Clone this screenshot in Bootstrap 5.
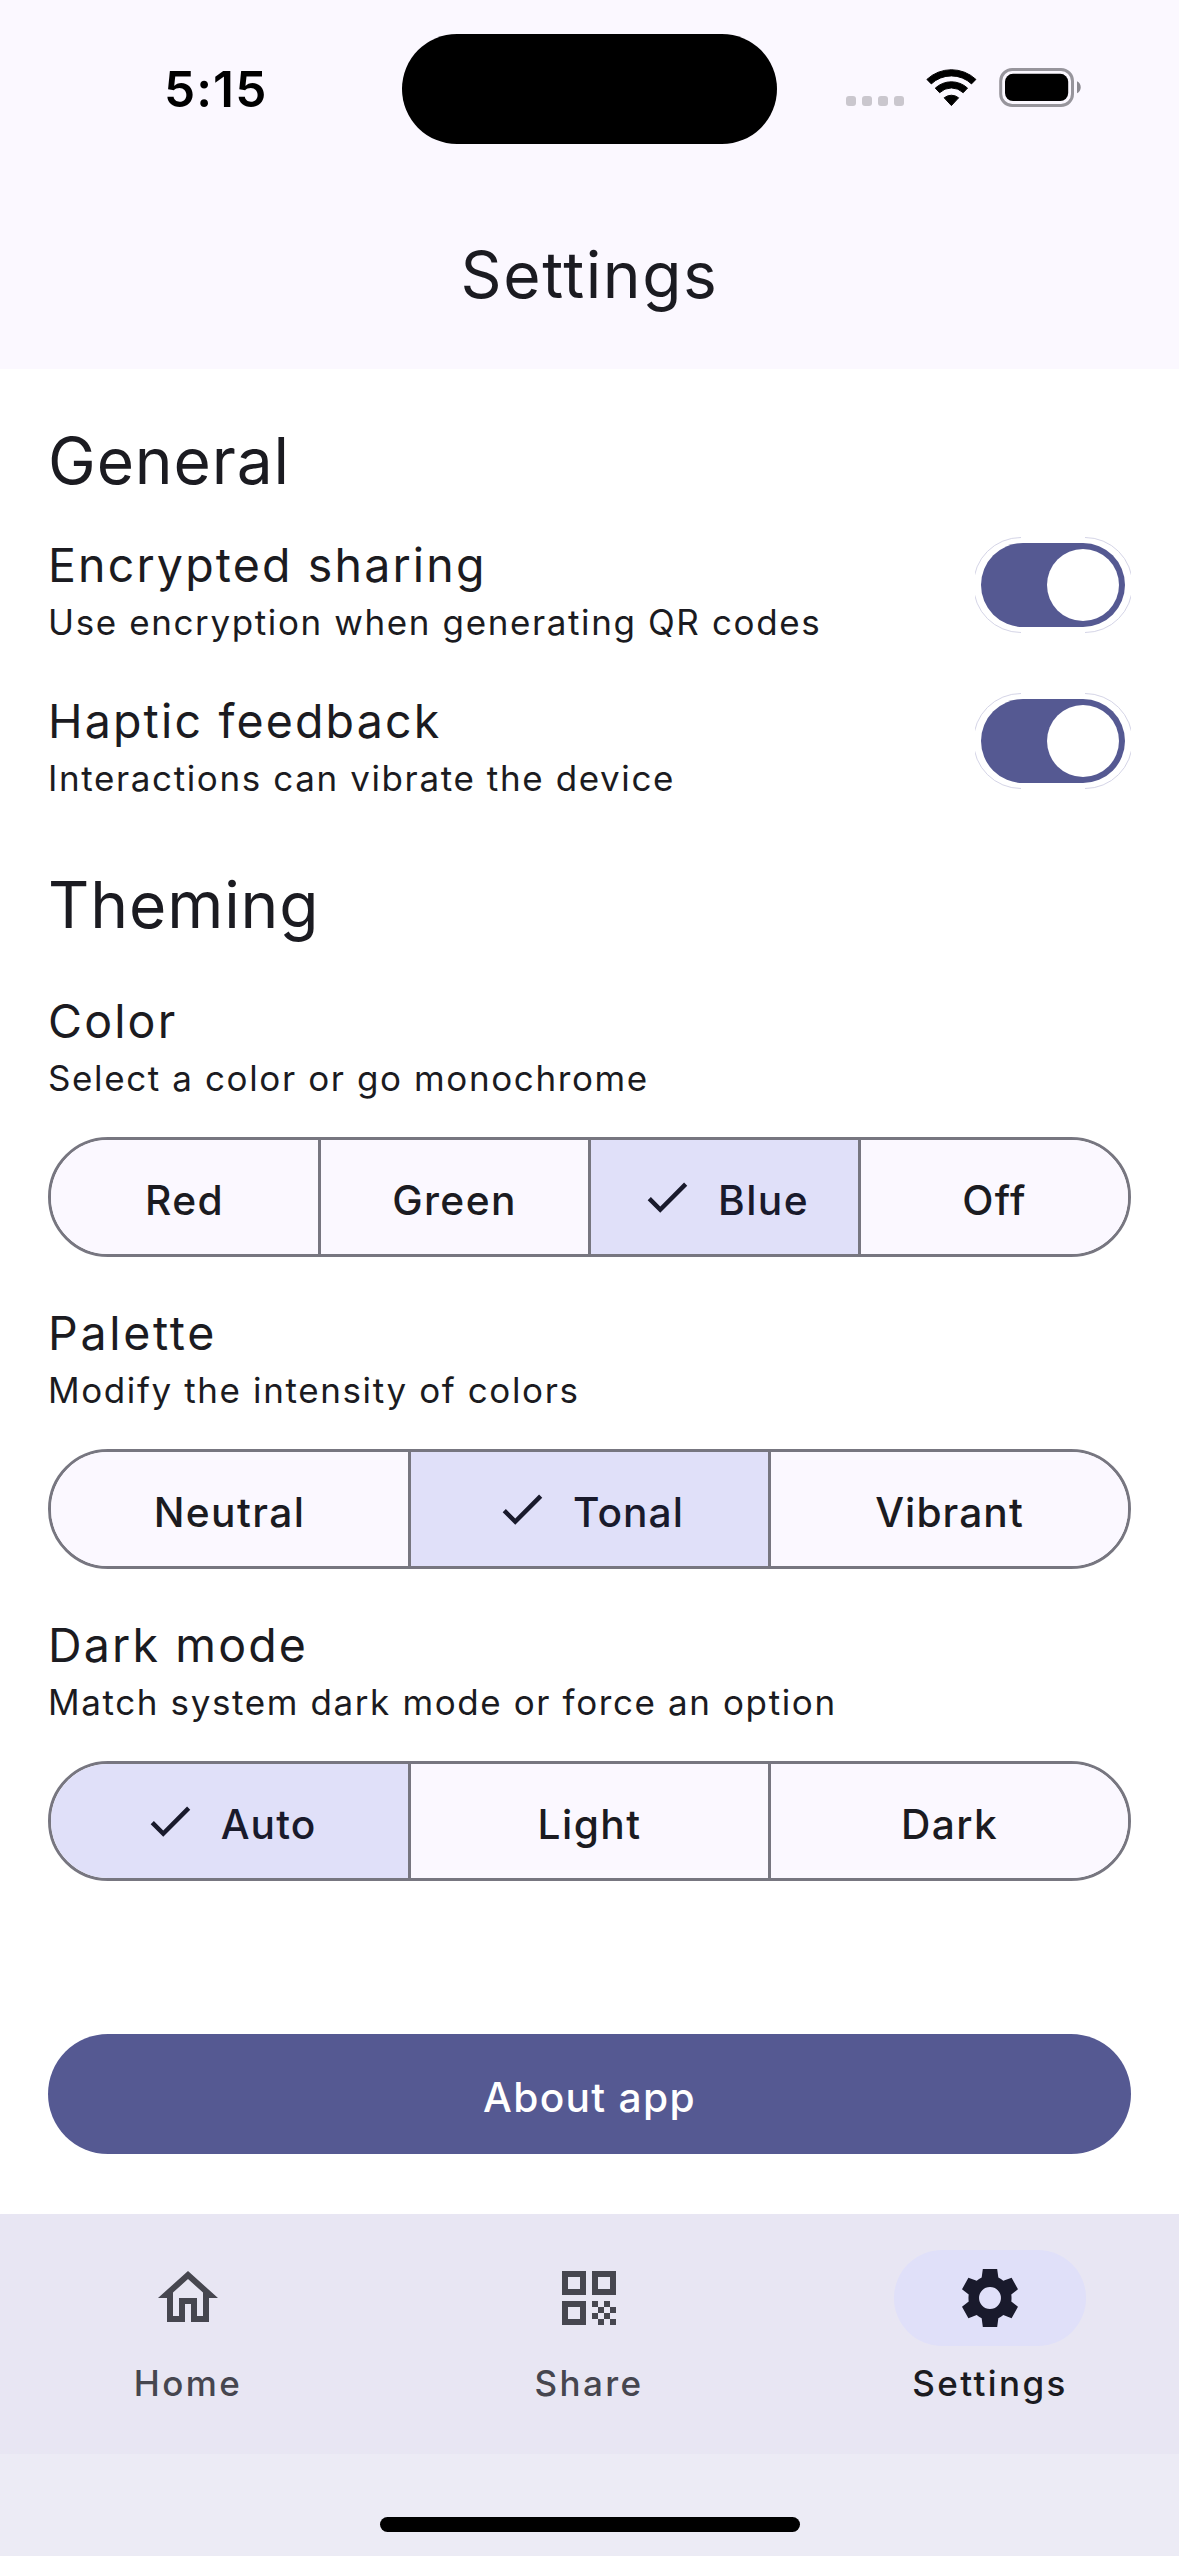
<!DOCTYPE html>
<html lang="en">
<head>
<meta charset="utf-8">
<meta name="viewport" content="width=device-width, initial-scale=1">
<title>Settings</title>
<link href="https://cdn.jsdelivr.net/npm/bootstrap@5.3.0/dist/css/bootstrap.min.css" rel="stylesheet">
<style>
  :root { --primary: #555992; --surface: #fbf8ff; --on-surface: #1b1b21; --outline: #777680; --chosen: #e0e0f9; }
  body { width: 1179px; height: 2556px; overflow: hidden; font-family: Inter, "Liberation Sans", sans-serif; color: var(--on-surface); background: #fff; }
  svg { display: block; flex: none; }

  .app-header { background: var(--surface); height: 369px; }
  .status-bar { display: grid; grid-template-columns: 402px 375px 1fr; height: 178px; }
  .clock { padding-left: 164px; margin-top: -1px; font-size: 49.5px; font-weight: 600; line-height: 60px; letter-spacing: 1.1px; color: #000; }
  .island { height: 110px; background: #000; }
  .status-icons { margin-left: 63px; }
  .page-title { height: 191px; padding-top: 4px; font-size: 64px; font-weight: 400; letter-spacing: 1.6px; }

  .settings-body { height: 1845px; padding: 50px 48px 0; }
  .section-title { font-size: 64px; line-height: 84px; font-weight: 400; letter-spacing: .9px; margin: 0; }
  .setting-name { font-size: 46.5px; line-height: 68px; font-weight: 400; letter-spacing: 2.16px; margin: 0; }
  .setting-name.airy { letter-spacing: 2.7px; }
  .setting-hint { font-size: 35px; line-height: 48px; letter-spacing: 1.61px; margin: -1px 0 0; padding-bottom: 1px; }
  .toggles { margin-top: 28px; gap: 40px; }
  .toggle { width: 156px; height: 96px; margin-top: 6px; }
  .theming { margin-top: 60px; }
  .choices { margin-top: 40px; gap: 42px; }

  .segmented { height: 120px; margin-top: 34px; border: 3px solid var(--outline); overflow: hidden; }
  .segmented .btn { flex: 1 1 0; padding: 0; margin: 0; border: 0; border-radius: 0; color: var(--on-surface); background: var(--surface); font-size: 40.7px; font-weight: 500; line-height: 60px; letter-spacing: 1.4px; gap: 24px; }
  .segmented .btn + .btn { margin: 0; border-left: 3px solid var(--outline); flex-basis: 3px; }
  .segmented .btn.chosen { background: var(--chosen); color: #191a2c; }
  .segmented .btn.snug { letter-spacing: 1.05px; }
  .btn-label { padding-top: 8px; }
  .about-btn { height: 120px; margin-top: 153px; border: 0; background: var(--primary); color: #fff; font-size: 40.7px; font-weight: 500; letter-spacing: 1.3px; }

  .tab-bar { height: 240px; padding-top: 36px; gap: 25px; background: #e8e6f3; }
  .tab-item { width: 376px; gap: 13px; color: #46464f; font-size: 35px; font-weight: 500; line-height: 48px; letter-spacing: 2.4px; }
  .tab-item.current { color: var(--on-surface); }
  .tab-pill { width: 192px; height: 96px; }
  .current .tab-pill { background: var(--chosen); color: #191a2c; }
  .gesture-area { height: 102px; padding: 63px 0 0 380px; background: #ecebf5; }
  .gesture-bar { width: 420px; height: 15px; background: #000; }
</style>
<script src="https://cdn.jsdelivr.net/npm/bootstrap@5.3.0/dist/js/bootstrap.bundle.min.js"></script>
</head>
<body>

<svg width="0" height="0" class="position-absolute">
  <symbol id="check" viewBox="0 0 24 24"><path d="M9 16.17L4.83 12l-1.42 1.41L9 19 21 7l-1.41-1.41z" fill="currentColor"/></symbol>
  <symbol id="switch-on" viewBox="0 0 156 96">
    <path d="M46 .5A47.5 47.5 0 0 0 46 95.5M110 .5A47.5 47.5 0 0 1 110 95.5" fill="none" stroke="#c9c9e0" stroke-width=".8"/>
    <rect x="6" y="6" width="144" height="84" rx="42" fill="#555992"/>
    <circle cx="108" cy="48" r="36" fill="#fff"/>
  </symbol>
</svg>

<header class="app-header">
  <div class="status-bar align-items-center">
    <div class="clock">5:15</div>
    <div class="island rounded-pill"></div>
    <svg class="status-icons" width="250" height="50" viewBox="840 64 250 50">
      <g fill="#cac7ce">
        <rect x="846" y="96" width="10" height="10" rx="3"/><rect x="862" y="96" width="10" height="10" rx="3"/>
        <rect x="878" y="96" width="10" height="10" rx="3"/><rect x="894" y="96" width="10" height="10" rx="3"/>
      </g>
      <g transform="translate(951.4 105.3)" fill="#000" stroke="#000" stroke-width="1" stroke-linejoin="round">
        <path d="M-24.5-25.9A35.9 35.9 0 0 1 24.5-25.9L20.1-21.4A29.2 29.2 0 0 0-20.1-21.4Z"/>
        <path d="M-16.1-17.2A23.7 23.7 0 0 1 16.1-17.2L11.8-12.6A17 17 0 0 0-11.8-12.6Z"/>
        <path d="M-7.2-7.5A11.4 11.4 0 0 1 7.2-7.5L0 .3Z"/>
      </g>
      <rect x="1000.7" y="69.5" width="71.8" height="36" rx="11.5" fill="none" stroke="#97959c" stroke-width="3"/>
      <rect x="1005" y="73.8" width="63.2" height="27.2" rx="8" fill="#000"/>
      <path d="M1077 81.3C1082 83.5 1082 91 1077 93.3Z" fill="#8b8990"/>
    </svg>
  </div>
  <h1 class="page-title d-flex align-items-center justify-content-center mb-0">Settings</h1>
</header>

<main class="settings-body">
  <section>
    <h2 class="section-title">General</h2>
    <div class="toggles d-flex flex-column">
      <div class="d-flex justify-content-between align-items-start">
        <div>
          <h3 class="setting-name">Encrypted sharing</h3>
          <p class="setting-hint">Use encryption when generating QR codes</p>
        </div>
        <svg class="toggle" role="switch" aria-checked="true"><use href="#switch-on"/></svg>
      </div>
      <div class="d-flex justify-content-between align-items-start">
        <div>
          <h3 class="setting-name">Haptic feedback</h3>
          <p class="setting-hint">Interactions can vibrate the device</p>
        </div>
        <svg class="toggle" role="switch" aria-checked="true"><use href="#switch-on"/></svg>
      </div>
    </div>
  </section>

  <section class="theming">
    <h2 class="section-title">Theming</h2>
    <div class="choices d-flex flex-column">
      <div>
        <h3 class="setting-name">Color</h3>
        <p class="setting-hint">Select a color or go monochrome</p>
        <div class="segmented d-flex rounded-pill" role="group" aria-label="Color">
          <button class="btn d-flex align-items-center justify-content-center"><span class="btn-label">Red</span></button>
          <button class="btn d-flex align-items-center justify-content-center"><span class="btn-label">Green</span></button>
          <button class="btn chosen d-flex align-items-center justify-content-center"><svg width="54" height="54"><use href="#check"/></svg><span class="btn-label">Blue</span></button>
          <button class="btn d-flex align-items-center justify-content-center"><span class="btn-label">Off</span></button>
        </div>
      </div>
      <div>
        <h3 class="setting-name airy">Palette</h3>
        <p class="setting-hint">Modify the intensity of colors</p>
        <div class="segmented d-flex rounded-pill" role="group" aria-label="Palette">
          <button class="btn d-flex align-items-center justify-content-center"><span class="btn-label">Neutral</span></button>
          <button class="btn chosen snug d-flex align-items-center justify-content-center"><svg width="54" height="54"><use href="#check"/></svg><span class="btn-label">Tonal</span></button>
          <button class="btn snug d-flex align-items-center justify-content-center"><span class="btn-label">Vibrant</span></button>
        </div>
      </div>
      <div>
        <h3 class="setting-name">Dark mode</h3>
        <p class="setting-hint">Match system dark mode or force an option</p>
        <div class="segmented d-flex rounded-pill" role="group" aria-label="Dark mode">
          <button class="btn chosen snug d-flex align-items-center justify-content-center"><svg width="54" height="54"><use href="#check"/></svg><span class="btn-label">Auto</span></button>
          <button class="btn d-flex align-items-center justify-content-center"><span class="btn-label">Light</span></button>
          <button class="btn d-flex align-items-center justify-content-center"><span class="btn-label">Dark</span></button>
        </div>
      </div>
    </div>
  </section>

  <button class="about-btn btn rounded-pill w-100 d-flex align-items-center justify-content-center p-0"><span class="btn-label">About app</span></button>
</main>

<nav class="tab-bar d-flex">
  <div class="tab-item d-flex flex-column align-items-center">
    <span class="tab-pill rounded-pill d-flex align-items-center justify-content-center">
      <svg width="72" height="72" viewBox="0 0 24 24" fill="currentColor"><path d="M12 5.69l5 4.5V18h-2v-6H9v6H7v-7.81l5-4.5M12 3L2 12h3v8h6v-6h2v6h6v-8h3L12 3z"/></svg>
    </span>
    <span>Home</span>
  </div>
  <div class="tab-item d-flex flex-column align-items-center">
    <span class="tab-pill rounded-pill d-flex align-items-center justify-content-center">
      <svg width="72" height="72" viewBox="0 0 24 24" fill="currentColor"><path fill-rule="evenodd" d="M3 3h8v8H3zM5 5v4h4V5zM13 3h8v8h-8zM15 5v4h4V5zM3 13h8v8H3zM5 15v4h4v-4z"/><path d="M13 13h2v2h-2zM17 13h2v2h-2zM15 15h2v2h-2zM19 15h2v2h-2zM13 17h2v2h-2zM17 17h2v2h-2zM15 19h2v2h-2zM19 19h2v2h-2z"/></svg>
    </span>
    <span>Share</span>
  </div>
  <div class="tab-item current d-flex flex-column align-items-center">
    <span class="tab-pill rounded-pill d-flex align-items-center justify-content-center">
      <svg width="72" height="72" viewBox="-12 -12 24 24" fill="currentColor"><path fill-rule="evenodd" d="M-2.39-9.67H2.39L2.78-6.85Q3.7-6.4 4.44-5.75L7.2-6.78 9.33-2.9 7.1-1.2Q7.25 0 7.1 1.2L9.33 2.9 7.2 6.78 4.44 5.68Q3.7 6.3 2.78 6.75L2.39 9.67H-2.39L-2.78 6.75Q-3.7 6.3-4.44 5.68L-7.2 6.78-9.33 2.9-7.1 1.2Q-7.25 0-7.1-1.2L-9.33-2.9-7.2-6.78-4.44-5.75Q-3.7-6.4-2.78-6.85ZM0-3.65A3.65 3.65 0 0 0 0 3.65A3.65 3.65 0 0 0 0-3.65Z"/></svg>
    </span>
    <span>Settings</span>
  </div>
</nav>
<div class="gesture-area"><div class="gesture-bar rounded-pill"></div></div>

</body>
</html>
